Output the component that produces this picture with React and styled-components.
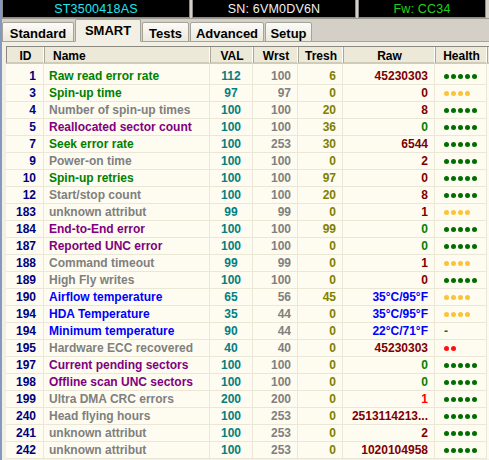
import React from "react"
import styled, { createGlobalStyle } from "styled-components"

const GlobalStyle = createGlobalStyle`
  html, body {
    margin: 0;
    padding: 0;
    background: #d4d0c8;
  }
  * { box-sizing: border-box; }
`

const Window = styled.div`
  width: 489px;
  height: 460px;
  overflow: hidden;
  background: #d4d0c8;
  border-left: 2px solid #8598bf;
  font-family: "Liberation Sans", Arial, sans-serif;
  display: flex;
  flex-direction: column;
`

const InfoBar = styled.div`
  display: flex;
  gap: 2px;
  height: 19px;
  padding-right: 3px;
  border-bottom: 1px solid #9d9a90;
  background: #d4d0c8;
`

const InfoBox = styled.div`
  width: ${p => p.$w}px;
  height: 18px;
  background: #000;
  border: 1px solid #8a8a8a;
  border-top: none;
  color: ${p => p.$color};
  font-size: 12.5px;
  display: flex;
  align-items: center;
  justify-content: center;
  padding-top: 1px;
  letter-spacing: 0.2px;
`

const TabBar = styled.div`
  display: flex;
  align-items: flex-end;
  height: 23px;
  margin-bottom: -1px;
  position: relative;
  z-index: 1;
`

const Tab = styled.div`
  width: ${p => p.$w}px;
  height: ${p => (p.$active ? 23 : 20)}px;
  margin-right: 1px;
  background: ${p => (p.$active ? "#f2f0e4" : "linear-gradient(#fbfbf8, #ebe9dc)")};
  border: 1px solid #a6a498;
  border-bottom: ${p => (p.$active ? "1px solid #f2f0e4" : "1px solid #a6a498")};
  border-radius: 2px 2px 0 0;
  font-size: 13px;
  font-weight: bold;
  color: #000;
  display: flex;
  align-items: center;
  justify-content: center;
  padding-top: ${p => (p.$active ? 0 : 2)}px;
`

const Panel = styled.div`
  flex: 1;
  background: #f2f0e4;
  border-top: 1px solid #a6a498;
  padding: 4px 0 0 4px;
`

const Grid = styled.div`
  display: grid;
  grid-template-columns: 38px 166px 43px 45px 45px 92px 52px;
`

const Header = styled(Grid)`
  height: 18px;
  background: #ece9d8;
  border-top: 1px solid #8c8a80;
  border-left: 1px solid #8c8a80;
  border-bottom: 2px solid #d0ccb8;
`

const HeadCell = styled.div`
  font-size: 12px;
  font-weight: bold;
  color: #000;
  display: flex;
  align-items: center;
  justify-content: ${p => (p.$left ? "flex-start" : "center")};
  padding-left: ${p => (p.$left ? 8 : 0)}px;
  padding-top: 2px;
  border-right: 1px solid #aca899;
  box-shadow: inset -1px 0 0 #ffffff;
`

const Body = styled.div`
  background: #fefcf0;
`

const Row = styled(Grid)`
  height: ${p => p.$h || 17}px;
`

const Cell = styled.div`
  font-size: 12px;
  font-weight: bold;
  color: ${p => p.$color};
  display: flex;
  align-items: center;
  justify-content: ${p => p.$align || "flex-end"};
  padding: 0 ${p => p.$pad ?? 7}px 0 ${p => p.$padL ?? 0}px;
  border-right: 1px solid #ebe7d6;
  border-bottom: ${p => (p.$spacer ? "none" : "1px solid #ebe7d6")};
  white-space: nowrap;
  overflow: hidden;
`

const Dots = styled.div`
  display: flex;
  gap: 2px;
  align-items: center;
`

const Dot = styled.span`
  width: 5px;
  height: 5px;
  border-radius: 50%;
  background: ${p => p.$color};
`

const Dash = styled.span`
  color: #008000;
  font-weight: bold;
  font-size: 12px;
`

const GREEN = "#008000"
const GRAY = "#808080"
const PURPLE = "#800080"
const BLUE = "#0000ff"
const MAROON = "#800000"
const RED = "#ff0000"

const HG = "#006e00"
const HY = "#fcc23a"
const HR = "#ff1010"

const rows = [
  [1, "Raw read error rate", GREEN, 112, 100, 6, "45230303", MAROON, 5, HG],
  [3, "Spin-up time", GREEN, 97, 97, 0, "0", MAROON, 4, HY],
  [4, "Number of spin-up times", GRAY, 100, 100, 20, "8", MAROON, 5, HG],
  [5, "Reallocated sector count", PURPLE, 100, 100, 36, "0", GREEN, 5, HG],
  [7, "Seek error rate", GREEN, 100, 253, 30, "6544", MAROON, 5, HG],
  [9, "Power-on time", GRAY, 100, 100, 0, "2", MAROON, 5, HG],
  [10, "Spin-up retries", GREEN, 100, 100, 97, "0", MAROON, 5, HG],
  [12, "Start/stop count", GRAY, 100, 100, 20, "8", MAROON, 5, HG],
  [183, "unknown attribut", GRAY, 99, 99, 0, "1", MAROON, 4, HY],
  [184, "End-to-End error", PURPLE, 100, 100, 99, "0", GREEN, 5, HG],
  [187, "Reported UNC error", PURPLE, 100, 100, 0, "0", GREEN, 5, HG],
  [188, "Command timeout", GRAY, 99, 99, 0, "1", MAROON, 4, HY],
  [189, "High Fly writes", GRAY, 100, 100, 0, "0", MAROON, 5, HG],
  [190, "Airflow temperature", BLUE, 65, 56, 45, "35°C/95°F", BLUE, 4, HY],
  [194, "HDA Temperature", BLUE, 35, 44, 0, "35°C/95°F", BLUE, 4, HY],
  [194, "Minimum temperature", BLUE, 90, 44, 0, "22°C/71°F", BLUE, 0, null],
  [195, "Hardware ECC recovered", GRAY, 40, 40, 0, "45230303", MAROON, 2, HR],
  [197, "Current pending sectors", PURPLE, 100, 100, 0, "0", GREEN, 5, HG],
  [198, "Offline scan UNC sectors", PURPLE, 100, 100, 0, "0", GREEN, 5, HG],
  [199, "Ultra DMA CRC errors", GRAY, 200, 200, 0, "1", RED, 5, HG],
  [240, "Head flying hours", GRAY, 100, 253, 0, "2513114213...", MAROON, 5, HG],
  [241, "unknown attribut", GRAY, 100, 253, 0, "2", MAROON, 5, HG],
  [242, "unknown attribut", GRAY, 100, 253, 0, "1020104958", MAROON, 5, HG],
]

const tabs = [
  ["Standard", 72],
  ["SMART", 66],
  ["Tests", 47],
  ["Advanced", 74],
  ["Setup", 47],
]

const App = () => {
  return (
    <>
      <GlobalStyle />
      <Window>
        <InfoBar>
          <InfoBox $w={188} $color="#1ee6f0">ST3500418AS</InfoBox>
          <InfoBox $w={164} $color="#f0f0f0">SN: 6VM0DV6N</InfoBox>
          <InfoBox $w={128} $color="#1ed21e">Fw: CC34</InfoBox>
        </InfoBar>
        <TabBar>
          {tabs.map(([t, w]) => (
            <Tab key={t} $w={w} $active={t === "SMART"}>{t}</Tab>
          ))}
        </TabBar>
        <Panel>
          <Header>
            <HeadCell>ID</HeadCell>
            <HeadCell $left>Name</HeadCell>
            <HeadCell>VAL</HeadCell>
            <HeadCell>Wrst</HeadCell>
            <HeadCell>Tresh</HeadCell>
            <HeadCell>Raw</HeadCell>
            <HeadCell>Health</HeadCell>
          </Header>
          <Body>
            <Row $h={4}>
              {[0, 1, 2, 3, 4, 5, 6].map(i => <Cell key={i} $spacer />)}
            </Row>
            {rows.map(([id, name, nc, val, wrst, tresh, raw, rc, n, hc], i) => (
              <Row key={i}>
                <Cell $color="#000080" $pad={7}>{id}</Cell>
                <Cell $color={nc} $align="flex-start" $pad={0} $padL={5}>{name}</Cell>
                <Cell $color="#008080" $align="center" $pad={0}>{val}</Cell>
                <Cell $color={GRAY} $pad={6}>{wrst}</Cell>
                <Cell $color="#808000" $pad={6}>{tresh}</Cell>
                <Cell $color={rc} $pad={6}>{raw}</Cell>
                <Cell $align="flex-start" $pad={0} $padL={9}>
                  {n === 0 ? (
                    <Dash>-</Dash>
                  ) : (
                    <Dots>
                      {Array.from({ length: n }).map((_, k) => (
                        <Dot key={k} $color={hc} />
                      ))}
                    </Dots>
                  )}
                </Cell>
              </Row>
            ))}
          </Body>
        </Panel>
      </Window>
    </>
  )
}

export default App
